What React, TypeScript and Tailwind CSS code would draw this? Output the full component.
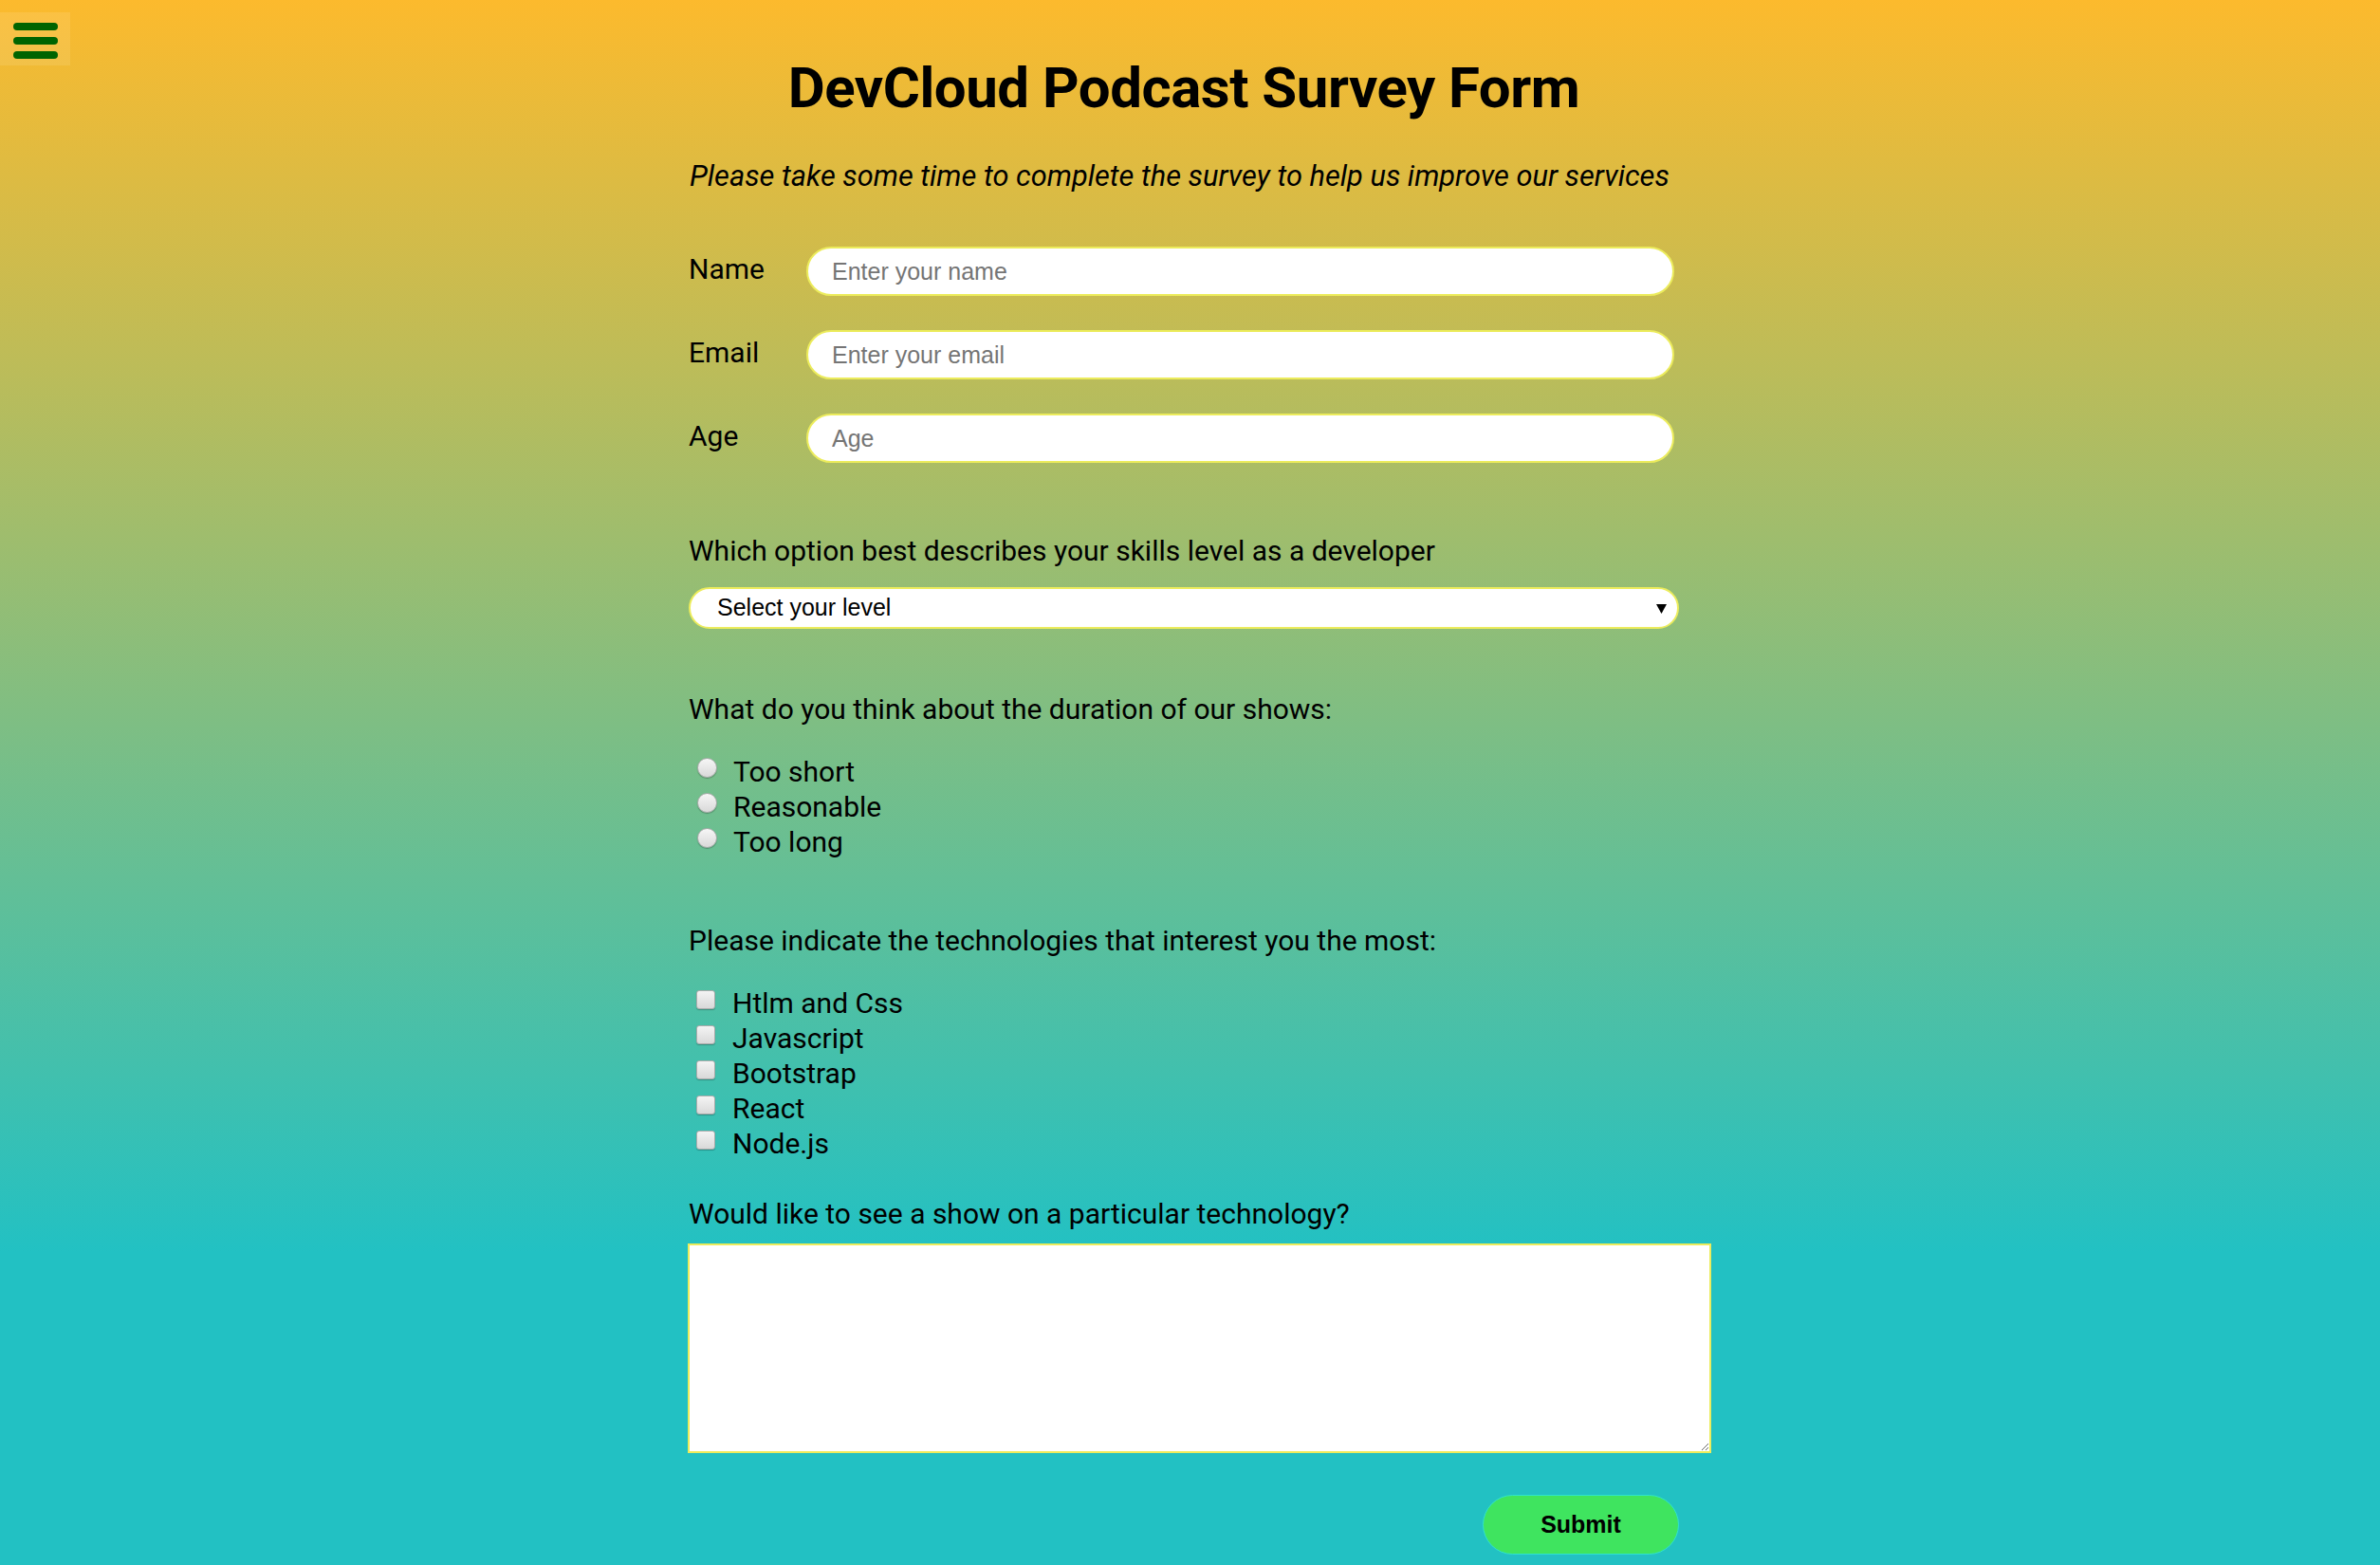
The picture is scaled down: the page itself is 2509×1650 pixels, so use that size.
import React from "react";

const roboto = "font-['Roboto',sans-serif]";
const lib = "font-['Liberation_Sans',Arial,sans-serif]";

function Radio({ label }: { label: string }) {
  return (
    <label className="flex items-start h-[37px]">
      <input
        type="radio"
        name="duration"
        className="appearance-none ml-[9px] mt-[4px] w-[21px] h-[21px] rounded-full border border-[#ababab] bg-[linear-gradient(180deg,#f6f6f6,#d9d9d9)] shadow-[0_1px_1px_rgba(0,0,0,0.25)]"
      />
      <span className="ml-[17px] text-[30px] leading-[37px]">{label}</span>
    </label>
  );
}

function Check({ label }: { label: string }) {
  return (
    <label className="flex items-start h-[37px]">
      <input
        type="checkbox"
        className="appearance-none ml-[8px] mt-[5px] w-[20px] h-[20px] rounded-[3px] border border-[#ababab] bg-[linear-gradient(180deg,#f4f4f4,#d9d9d9)] shadow-[0_1px_1px_rgba(0,0,0,0.25)]"
      />
      <span className="ml-[18px] text-[30px] leading-[37px]">{label}</span>
    </label>
  );
}

function Field({ label, placeholder, type }: { label: string; placeholder: string; type: string }) {
  return (
    <div className="flex items-center h-[52px]">
      <label className="w-[124px] text-[30px] leading-[36px] pb-[4px]">{label}</label>
      <input
        type={type}
        placeholder={placeholder}
        className={`w-[915px] h-[52px] rounded-full border-2 border-[#ecec5c] bg-white px-[25px] text-[25px] text-black placeholder:text-[#757575] outline-none ${lib}`}
      />
    </div>
  );
}

export default function App() {
  return (
    <div
      className={`relative min-h-[1650px] w-full text-black ${roboto} bg-[linear-gradient(180deg,#fcba2d_0px,#22c1c3_1320px,#22c1c3_100%)]`}
    >
      <button className="absolute left-0 top-[13px] w-[74px] h-[56px] bg-white/10 flex flex-col gap-[7px] pl-[14px] pt-[11px]">
        <span className="block w-[47px] h-[8px] rounded-full bg-[#006400]" />
        <span className="block w-[47px] h-[8px] rounded-full bg-[#006400]" />
        <span className="block w-[47px] h-[8px] rounded-full bg-[#006400]" />
      </button>

      <div className="flex justify-center pr-[13px] pt-[61px]">
        <form className="w-[1044px] flex flex-col">
          <h1 className="text-center text-[60px] leading-[64px] font-bold tracking-[-0.5px]">
            DevCloud Podcast Survey Form
          </h1>
          <p className="mt-[43px] text-[30.8px] leading-[36px] italic pl-[1px]">
            Please take some time to complete the survey to help us improve our services
          </p>

          <div className="mt-[56px] flex flex-col gap-[36px]">
            <Field label="Name" placeholder="Enter your name" type="text" />
            <Field label="Email" placeholder="Enter your email" type="email" />
            <Field label="Age" placeholder="Age" type="number" />
          </div>

          <p className="mt-[75px] text-[30px] leading-[36px]">
            Which option best describes your skills level as a developer
          </p>
          <div className="relative mt-[20px] h-[44px]">
            <select
              className={`appearance-none w-full h-[44px] rounded-full border-2 border-[#ecec5c] bg-white pl-[28px] text-[25px] text-black outline-none ${lib}`}
              defaultValue=""
            >
              <option value="">Select your level</option>
              <option>Beginner</option>
              <option>Intermediate</option>
              <option>Advanced</option>
            </select>
            <svg
              className="pointer-events-none absolute right-[13px] top-[18px]"
              width="11"
              height="10"
              viewBox="0 0 11 10"
            >
              <polygon points="0,0 11,0 5.5,10" fill="#000" />
            </svg>
          </div>

          <p className="mt-[67px] text-[30px] leading-[36px]">
            What do you think about the duration of our shows:
          </p>
          <div className="mt-[29px] flex flex-col">
            <Radio label="Too short" />
            <Radio label="Reasonable" />
            <Radio label="Too long" />
          </div>

          <p className="mt-[68px] text-[30px] leading-[36px]">
            Please indicate the technologies that interest you the most:
          </p>
          <div className="mt-[29px] flex flex-col">
            <Check label="Htlm and Css" />
            <Check label="Javascript" />
            <Check label="Bootstrap" />
            <Check label="React" />
            <Check label="Node.js" />
          </div>

          <p className="mt-[38px] text-[30px] leading-[36px]">
            Would like to see a show on a particular technology?
          </p>
          <textarea className="mt-[13px] w-[1079px] h-[221px] border-2 border-[#ecec5c] bg-white outline-none -ml-[1px] block" />

          <div className="mt-[44px] flex justify-end">
            <button
              type="button"
              className={`w-[207px] h-[63px] rounded-full bg-[#3fe45f] border border-[#2ee2cf] text-[25px] font-bold text-black ${lib}`}
            >
              Submit
            </button>
          </div>
        </form>
      </div>
    </div>
  );
}
